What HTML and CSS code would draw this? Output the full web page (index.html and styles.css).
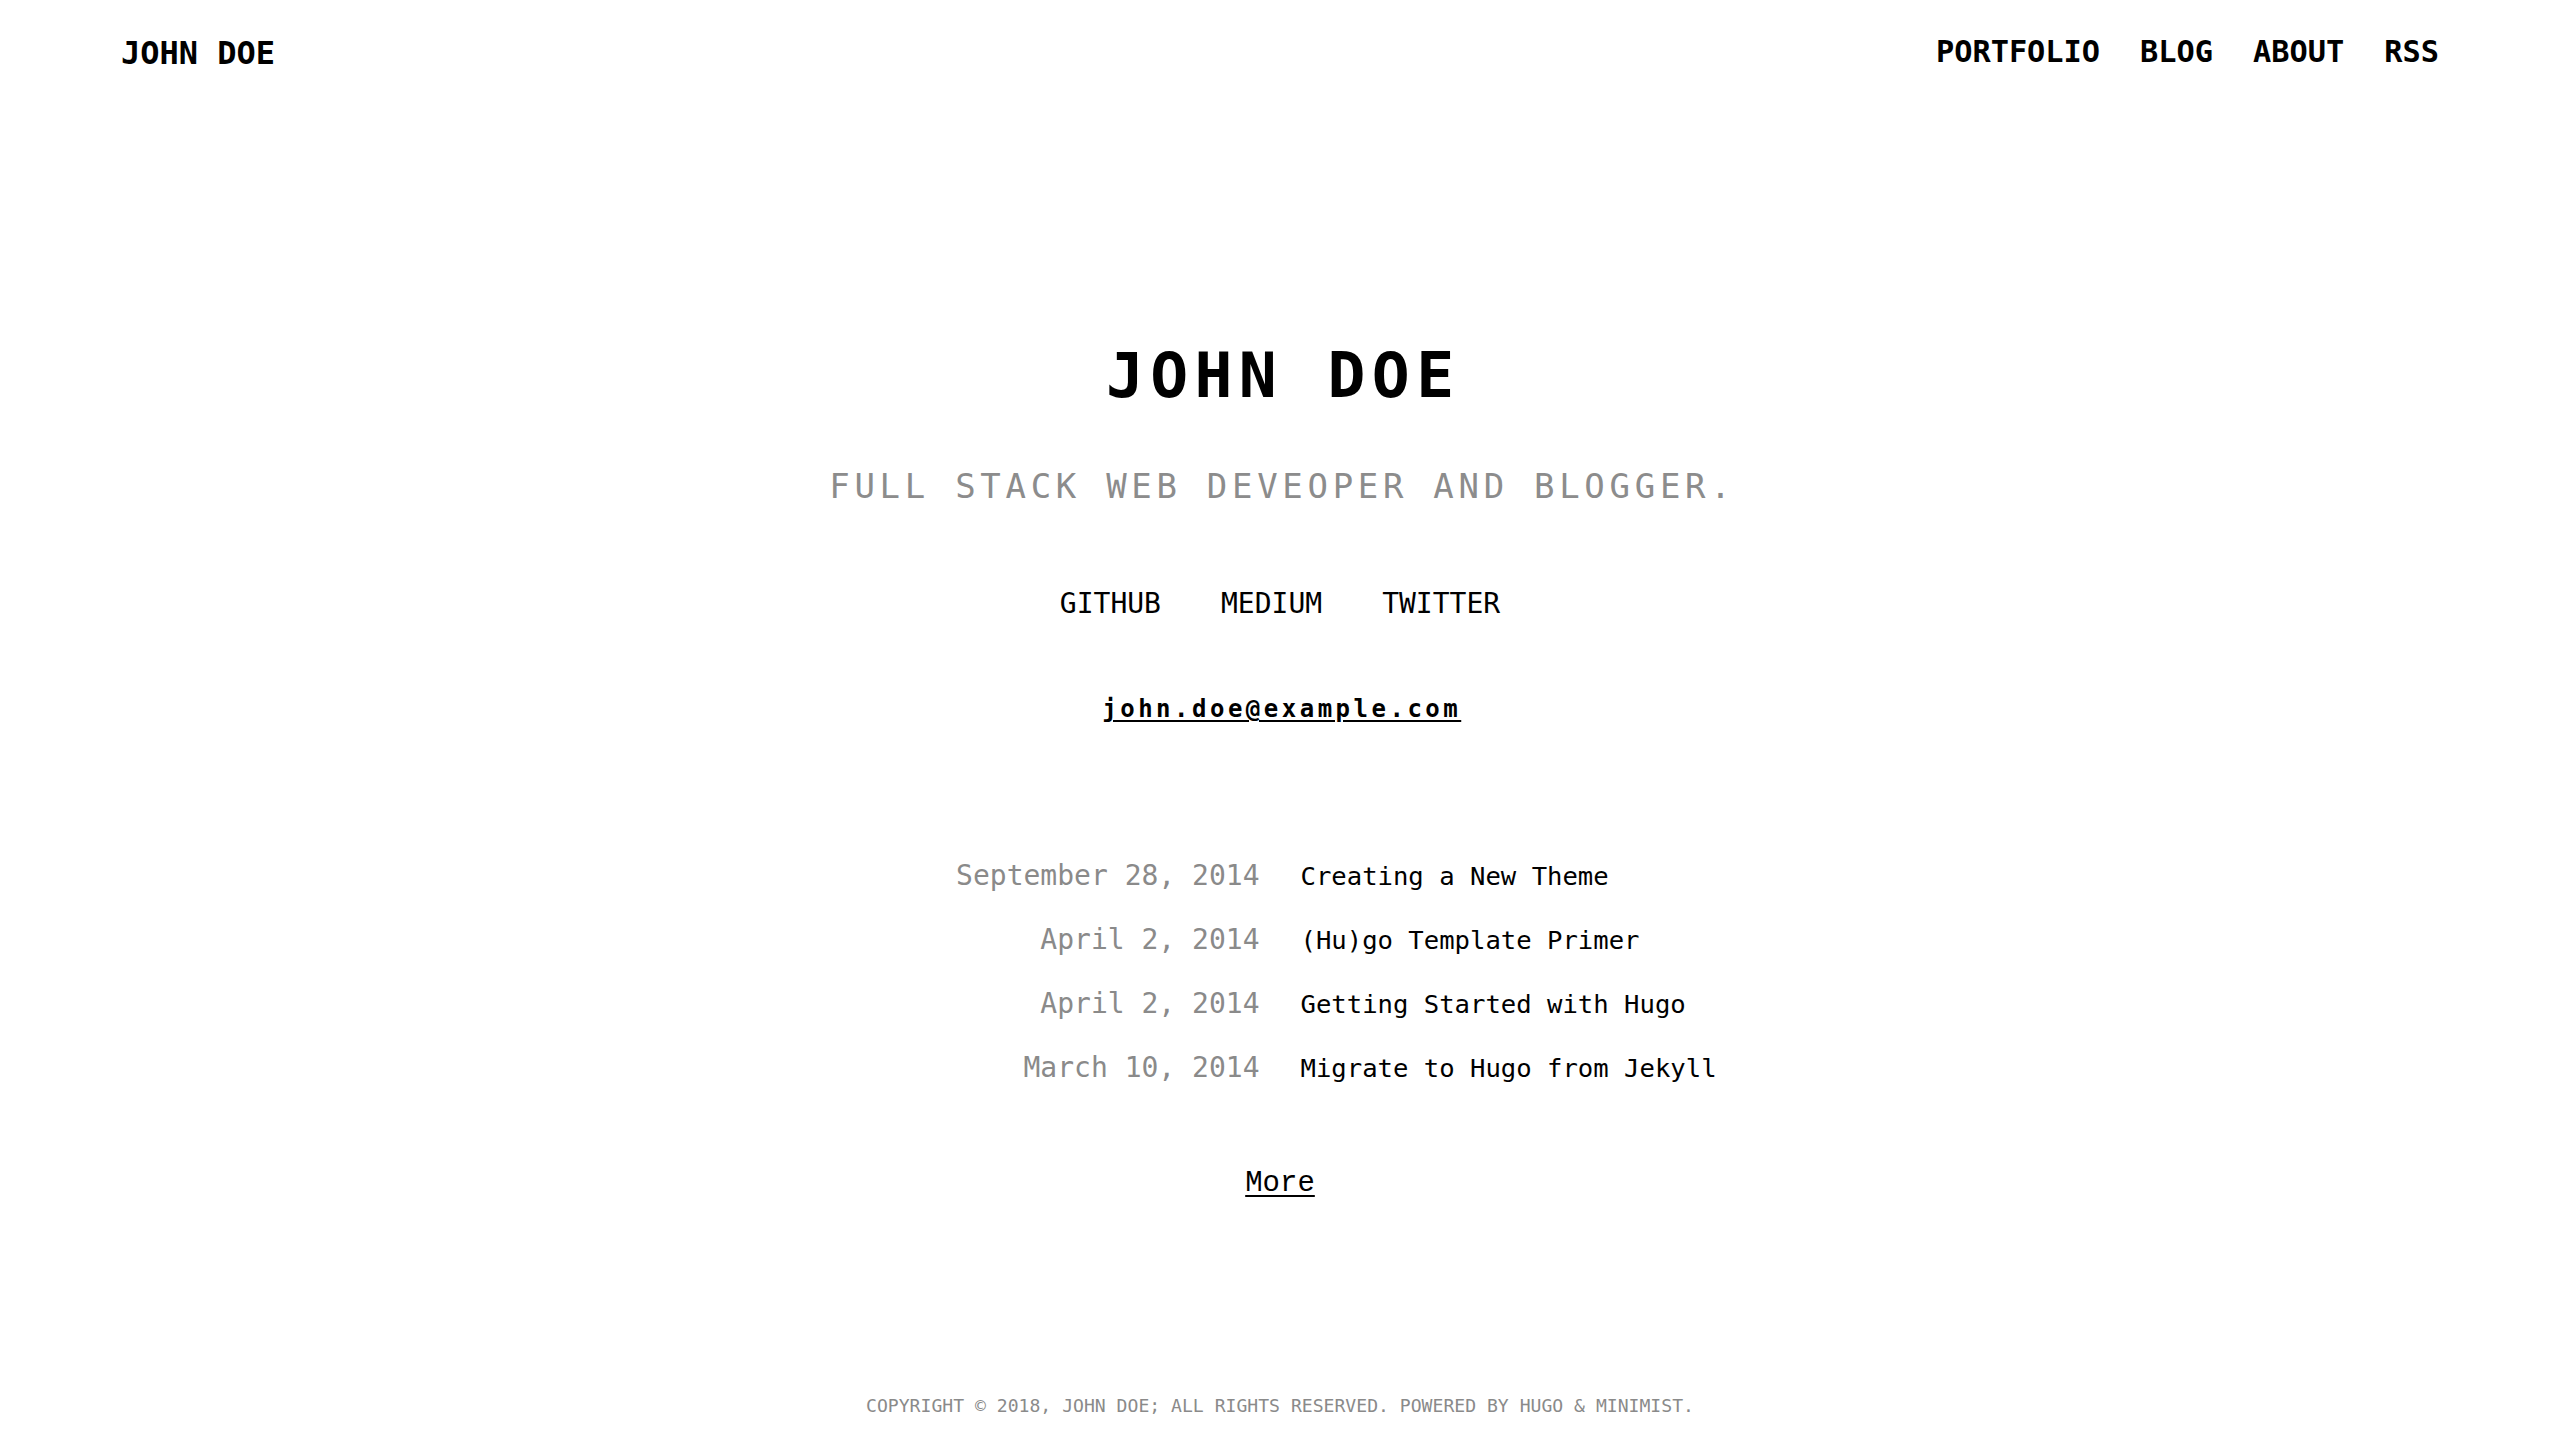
FILE: index.html
```html
<!DOCTYPE html>
<html lang="en">
<head>
<meta charset="utf-8">
<title>John Doe</title>
<link rel="stylesheet" href="styles.css">
</head>
<body>
<header class="site-header">
  <a class="brand" href="#">JOHN DOE</a>
  <nav class="nav">
    <a href="#">PORTFOLIO</a>
    <a href="#">BLOG</a>
    <a href="#">ABOUT</a>
    <a href="#">RSS</a>
  </nav>
</header>
<main class="main">
  <h1 class="hero-title">JOHN DOE</h1>
  <p class="hero-sub">FULL STACK WEB DEVEOPER AND BLOGGER.</p>
  <div class="social">
    <a href="#">GITHUB</a>
    <a href="#">MEDIUM</a>
    <a href="#">TWITTER</a>
  </div>
  <a class="email" href="#">john.doe@example.com</a>
  <div class="posts">
    <span class="date">September 28, 2014</span><a class="title" href="#">Creating a New Theme</a>
    <span class="date">April 2, 2014</span><a class="title" href="#">(Hu)go Template Primer</a>
    <span class="date">April 2, 2014</span><a class="title" href="#">Getting Started with Hugo</a>
    <span class="date">March 10, 2014</span><a class="title" href="#">Migrate to Hugo from Jekyll</a>
  </div>
  <a class="more" href="#">More</a>
</main>
<footer class="footer">COPYRIGHT © 2018, JOHN DOE; ALL RIGHTS RESERVED. POWERED BY HUGO &amp; MINIMIST.</footer>
</body>
</html>
```
FILE: styles.css
```css
html, body {
  margin: 0;
  padding: 0;
  background: #fff;
}
body {
  font-family: "DejaVu Sans Mono", monospace;
  color: #000;
  height: 1436px;
  overflow: hidden;
}
a {
  color: #000;
  text-decoration: none;
}
.site-header {
  display: flex;
  justify-content: space-between;
  align-items: center;
  height: 104px;
  padding: 0 121px;
}
.brand {
  font-size: 32px;
  font-weight: bold;
  line-height: 1;
  margin-top: 2px;
}
.nav {
  display: flex;
  gap: 40px;
}
.nav a {
  font-size: 30.3px;
  font-weight: bold;
  line-height: 1;
}
.main {
  display: flex;
  flex-direction: column;
  align-items: center;
}
.hero-title {
  margin: 240px 0 0 0;
  font-size: 63px;
  font-weight: bold;
  line-height: 1;
  letter-spacing: 6.4px;
  padding-left: 6.4px;
}
.hero-sub {
  margin: 62px 0 0 0;
  font-size: 34px;
  line-height: 1;
  color: #8c8c8c;
  letter-spacing: 4.7px;
  padding-left: 4.7px;
}
.social {
  margin-top: 87px;
  display: flex;
  gap: 60px;
}
.social a {
  font-size: 28px;
  line-height: 1;
}
.email {
  margin-top: 79px;
  font-size: 24px;
  font-weight: bold;
  line-height: 1;
  letter-spacing: 3.5px;
  padding-left: 3.5px;
  text-decoration: underline;
  text-decoration-thickness: 2px;
  text-underline-offset: 3px;
}
.posts {
  margin-top: 141px;
  align-self: stretch;
  display: grid;
  grid-template-columns: 1fr 1fr;
  column-gap: 41px;
  row-gap: 36px;
  align-items: baseline;
}
.date {
  text-align: right;
  font-size: 28px;
  line-height: 28px;
  color: #8a8a8a;
}
.title {
  font-size: 25.6px;
  line-height: 28px;
}
.more {
  margin-top: 87px;
  font-family: "Liberation Mono", monospace;
  font-size: 29px;
  line-height: 1;
  text-decoration: underline;
  text-decoration-thickness: 2px;
  text-underline-offset: 4px;
}
.footer {
  margin-top: 199px;
  text-align: center;
  font-size: 18.1px;
  line-height: 1;
  color: #8a8a8a;
}
```
